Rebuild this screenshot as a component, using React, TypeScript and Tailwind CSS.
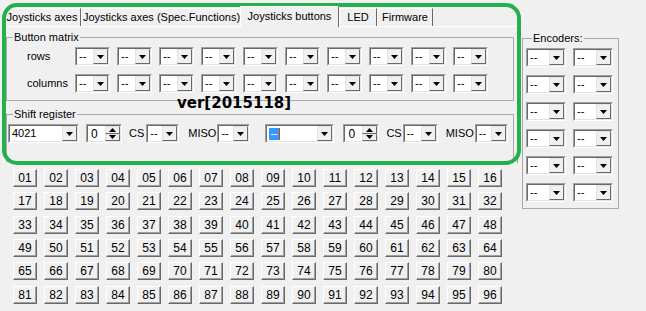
import React from 'react'

// Joystick config form – "Joysticks buttons" page

const FONT = "font-['Liberation_Sans',Arial,sans-serif]"

const TABS = [
  { label: 'Joysticks axes', w: 'w-[78px]' },
  { label: 'Joysticks axes (Spec.Functions)', w: 'w-[161px]' },
  { label: 'Joysticks buttons', w: 'w-[99px]', active: true },
  { label: 'LED', w: 'w-[38px]' },
  { label: 'Firmware', w: 'w-[56px]' },
]

function Down() {
  return (
    <svg width="7" height="4" viewBox="0 0 7 4">
      <path d="M0 0h7L3.5 4z" fill="#000" />
    </svg>
  )
}

function Up() {
  return (
    <svg width="7" height="4" viewBox="0 0 7 4">
      <path d="M0 4h7L3.5 0z" fill="#000" />
    </svg>
  )
}

// sunken 3D frame used by combos and spin edits
function Sunken({ w, children }: { w: string; children: React.ReactNode }) {
  return (
    <div className={`${w} h-[19px] shrink-0 border border-t-[#a0a0a0] border-l-[#a0a0a0] border-r-white border-b-white`}>
      <div className="flex h-full border border-t-[#696969] border-l-[#696969] border-r-[#e3e3e3] border-b-[#e3e3e3] bg-white">
        {children}
      </div>
    </div>
  )
}

function Combo({ w, value = '--', active = false }: { w: string; value?: string; active?: boolean }) {
  return (
    <Sunken w={w}>
      <div className="flex flex-1 items-center pl-[2px] text-[11px] leading-none">
        {active ? (
          <span className="flex h-[12px] items-center border-r border-[#c05000] bg-[#3399ff] pl-[1px] pr-[1px] text-white">{value}</span>
        ) : (
          value
        )}
      </div>
      <div className="flex w-[15px] items-center justify-center border border-t-[#e3e3e3] border-l-[#e3e3e3] border-r-[#696969] border-b-[#696969] bg-[#f0f0f0]">
        <Down />
      </div>
    </Sunken>
  )
}

function Spin() {
  return (
    <Sunken w="w-[36px]">
      <div className="flex flex-1 items-center pl-[3px] text-[12px] leading-none">0</div>
      <div className="flex w-[15px] flex-col">
        <div className="flex flex-1 items-center justify-center border border-t-[#e3e3e3] border-l-[#e3e3e3] border-r-[#696969] border-b-[#696969] bg-[#f0f0f0]">
          <Up />
        </div>
        <div className="flex flex-1 items-center justify-center border border-t-[#e3e3e3] border-l-[#e3e3e3] border-r-[#696969] border-b-[#696969] bg-[#f0f0f0]">
          <Down />
        </div>
      </div>
    </Sunken>
  )
}

function Legend({ children }: { children: React.ReactNode }) {
  return <legend className="ml-[6px] px-[1px] text-[11px] leading-[12px]">{children}</legend>
}

function MatrixRow({ label }: { label: string }) {
  return (
    <div className="flex items-center">
      <span className="w-[68px] pl-[20px] text-[11px]">{label}</span>
      <div className="flex gap-[7px]">
        {Array.from({ length: 10 }, (_, i) => (
          <Combo key={i} w="w-[35px]" />
        ))}
      </div>
    </div>
  )
}

export default function App() {
  const buttons = Array.from({ length: 96 }, (_, i) => String(i + 1).padStart(2, '0'))

  return (
    <div className={`relative h-[311px] w-[646px] overflow-hidden bg-[#f0f0f0] text-black ${FONT}`}>
      <div className="flex">
        <div className="ml-[3px] w-[515px]">
          {/* tab strip */}
          <div className="flex h-[26px] items-end">
            {TABS.map(t =>
              t.active ? (
                <div
                  key={t.label}
                  className={`${t.w} relative z-10 -mb-px -ml-[2px] flex h-[21px] items-center justify-center border-t border-l border-white border-r border-r-[#696969] bg-[#f0f0f0] pb-[2px] text-[11px]`}
                >
                  {t.label}
                </div>
              ) : (
                <div
                  key={t.label}
                  className={`${t.w} flex h-[18px] items-center justify-center border-t border-l border-white border-r border-r-[#696969] text-[11px]`}
                >
                  {t.label}
                </div>
              )
            )}
          </div>

          {/* tab page */}
          <div className="relative h-[137px] border-t border-l border-white border-r border-r-[#a0a0a0] px-[2px] pt-[4px]">
            <fieldset className="w-[508px] border border-[#a9a9a9] pb-[7px]">
              <Legend>Button matrix</Legend>
              <div className="flex flex-col gap-[8px] pt-[4px]">
                <MatrixRow label="rows" />
                <MatrixRow label="columns" />
              </div>
            </fieldset>

            <fieldset className="mt-[7px] w-[508px] border border-[#a9a9a9] pb-[18px]">
              <Legend>Shift register</Legend>
              <div className="flex items-center pt-[4px] pl-[1px] text-[11px]">
                <Combo w="w-[71px]" value="4021" />
                <div className="ml-[7px]"><Spin /></div>
                <span className="ml-[7px]">CS</span>
                <div className="ml-[2px]"><Combo w="w-[33px]" /></div>
                <span className="ml-[9px]">MISO</span>
                <div className="ml-[1px]"><Combo w="w-[33px]" /></div>
                <div className="ml-[15px]"><Combo w="w-[69px]" active /></div>
                <div className="ml-[9px]"><Spin /></div>
                <span className="ml-[7px]">CS</span>
                <div className="ml-[1px]"><Combo w="w-[35px]" /></div>
                <span className="ml-[8px]">MISO</span>
                <div className="ml-[1px]"><Combo w="w-[33px]" /></div>
              </div>
            </fieldset>

            <span className="absolute left-[173px] top-[67px] font-['DejaVu_Sans',sans-serif] text-[15px] font-bold leading-[18px]">
              ver[2015118]
            </span>
          </div>

          {/* button grid */}
          <div className="ml-[10px] mt-[6px] grid grid-cols-[repeat(16,24px)] gap-x-[7px] gap-y-[5.33px]">
            {buttons.map(b => (
              <div
                key={b}
                className="flex h-[18px] items-center justify-center border border-t-white border-l-white border-r-[#696969] border-b-[#696969] bg-[#f0f0f0] text-[12px] leading-none shadow-[inset_-1px_-1px_0_#a0a0a0]"
              >
                {b}
              </div>
            ))}
          </div>
        </div>

        {/* encoders */}
        <fieldset className="ml-[4px] mt-[32px] h-fit w-[97px] border border-[#a9a9a9] pb-[6px] pl-[3px]">
          <Legend>Encoders:</Legend>
          <div className="grid grid-cols-[40px_40px] gap-x-[7px] gap-y-[8px] pt-[4px]">
            {Array.from({ length: 12 }, (_, i) => (
              <Combo key={i} w="w-[40px]" />
            ))}
          </div>
        </fieldset>
      </div>

      {/* green annotation ring */}
      <div className="pointer-events-none absolute left-[2px] top-[3px] h-[162px] w-[519px] rounded-[15px] border-4 border-[#22b14c]" />
    </div>
  )
}
